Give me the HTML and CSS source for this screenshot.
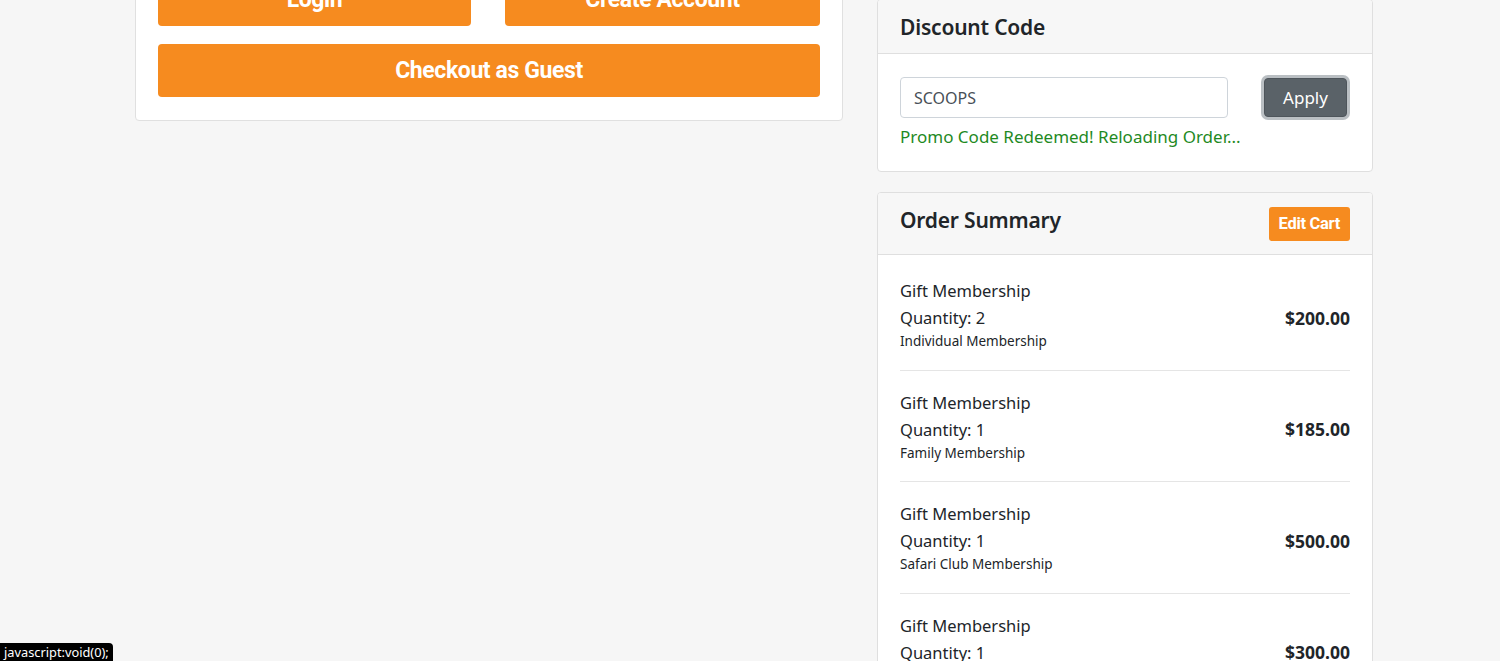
FILE: index.html
```html
<!DOCTYPE html>
<html>
<head>
<meta charset="utf-8">
<link rel="stylesheet" href="styles.css">
</head>
<body>
<div class="page">
  <div class="left-card">
    <div class="btn-row">
      <a class="btn-orange" href="javascript:void(0);">Login</a>
      <a class="btn-orange" href="javascript:void(0);">Create Account</a>
    </div>
    <a class="btn-orange full" href="javascript:void(0);">Checkout as Guest</a>
  </div>
  <div class="right-col">
    <div class="card">
      <div class="card-header"><h3 class="card-title">Discount Code</h3></div>
      <div class="card-body discount-body">
        <div class="discount-row">
          <input class="code-input" type="text" value="SCOOPS">
          <button class="btn-apply">Apply</button>
        </div>
        <div class="promo-msg">Promo Code Redeemed! Reloading Order...</div>
      </div>
    </div>
    <div class="card summary">
      <div class="card-header header-flex">
        <h3 class="card-title summary-title">Order Summary</h3>
        <a class="btn-edit" href="javascript:void(0);">Edit Cart</a>
      </div>
      <div class="card-body items">
        <div class="item">
          <div class="item-info">
            <div class="item-name">Gift Membership</div>
            <div class="item-qty">Quantity: 2</div>
            <div class="item-type">Individual Membership</div>
          </div>
          <div class="item-price">$200.00</div>
        </div>
        <div class="item">
          <div class="item-info">
            <div class="item-name">Gift Membership</div>
            <div class="item-qty">Quantity: 1</div>
            <div class="item-type">Family Membership</div>
          </div>
          <div class="item-price">$185.00</div>
        </div>
        <div class="item">
          <div class="item-info">
            <div class="item-name">Gift Membership</div>
            <div class="item-qty">Quantity: 1</div>
            <div class="item-type">Safari Club Membership</div>
          </div>
          <div class="item-price">$500.00</div>
        </div>
        <div class="item">
          <div class="item-info">
            <div class="item-name">Gift Membership</div>
            <div class="item-qty">Quantity: 1</div>
            <div class="item-type">Premium Membership</div>
          </div>
          <div class="item-price">$300.00</div>
        </div>
      </div>
    </div>
  </div>
</div>
<div class="status-tip">javascript:void(0);</div>
</body>
</html>
```

FILE: styles.css
```css
html, body {
  margin: 0;
  padding: 0;
  background: #f6f6f6;
  height: 661px;
  overflow: hidden;
}
body {
  font-family: "Noto Sans", "Open Sans", sans-serif;
  color: #212529;
  position: relative;
}
.page {
  display: flex;
  align-items: flex-start;
  gap: 34px;
  padding-left: 135px;
  margin-top: -51px;
}
.left-card {
  width: 662px;
  background: #fff;
  border: 1px solid #e0e0e0;
  border-radius: 4px;
  padding: 23px 22px 23px 22px;
  display: flex;
  flex-direction: column;
  gap: 18px;
}
.btn-row {
  display: grid;
  grid-template-columns: 313px 1fr;
  gap: 34px;
}
.btn-orange {
  display: flex;
  align-items: center;
  justify-content: center;
  height: 53px;
  background: #f68b1f;
  color: #fff;
  border-radius: 4px;
  text-decoration: none;
  font-family: Roboto, "Liberation Sans", sans-serif;
  font-weight: 700;
  font-size: 23px;
  letter-spacing: -0.4px;
}
.btn-orange.full {
  width: 100%;
}
.right-col {
  width: 496px;
  margin-top: 50px;
  display: flex;
  flex-direction: column;
  gap: 20px;
}
.card {
  background: #fff;
  border: 1px solid #dfdfdf;
  border-radius: 4px;
  overflow: hidden;
}
.card-header {
  background: #f7f7f7;
  border-bottom: 1px solid #dfdfdf;
  padding: 12px 22px;
}
.card-title {
  margin: 0;
  font-size: 21px;
  line-height: 29px;
  font-weight: 600;
  letter-spacing: -0.2px;
  padding-top: 1px;
  margin-bottom: -1px;
}
.header-flex {
  display: flex;
  align-items: center;
  justify-content: space-between;
  padding: 13px 22px;
}
.summary-title {
  padding-top: 0;
  margin-bottom: 0;
  padding-bottom: 6px;
}
.btn-edit {
  display: flex;
  align-items: center;
  height: 34px;
  padding: 0 10px;
  background: #f68b1f;
  color: #fff;
  border-radius: 3px;
  text-decoration: none;
  font-family: Roboto, "Liberation Sans", sans-serif;
  font-weight: 700;
  font-size: 16.5px;
  letter-spacing: -0.3px;
}
.discount-body {
  padding: 23px 22px 22px 22px;
}
.discount-row {
  display: flex;
  justify-content: space-between;
  align-items: center;
}
.code-input {
  box-sizing: border-box;
  width: 328px;
  height: 41px;
  border: 1px solid #ced4da;
  border-radius: 4px;
  padding: 0 13px;
  font-family: "Noto Sans", sans-serif;
  font-size: 16px;
  color: #495057;
  background: #fff;
}
.btn-apply {
  width: 83px;
  height: 39px;
  margin-right: 3px;
  border: 1px solid #4e555b;
  border-radius: 4px;
  background: #5a6268;
  color: #fff;
  font-family: "Noto Sans", sans-serif;
  font-size: 17px;
  box-shadow: 0 0 0 3px rgba(130, 138, 145, 0.55);
}
.promo-msg {
  margin-top: 7px;
  color: #1f8a1f;
  font-size: 17px;
  line-height: 24px;
}
.items {
  padding: 4px 22px 0 22px;
}
.item {
  display: flex;
  align-items: center;
  justify-content: space-between;
  padding: 18px 0 17px 0;
  border-bottom: 1px solid #e5e5e5;
}
.item-name, .item-qty {
  font-size: 16.5px;
  line-height: 27px;
}
.item-type {
  font-size: 13.5px;
  line-height: 21.5px;
}
.item-price {
  font-weight: 700;
  font-size: 17.5px;
  padding-top: 6px;
}
.status-tip {
  position: absolute;
  left: 0;
  top: 643px;
  height: 18px;
  padding: 0 4px;
  background: #000;
  color: #fff;
  font-size: 12.8px;
  line-height: 19px;
  border-top-right-radius: 4px;
}
```
